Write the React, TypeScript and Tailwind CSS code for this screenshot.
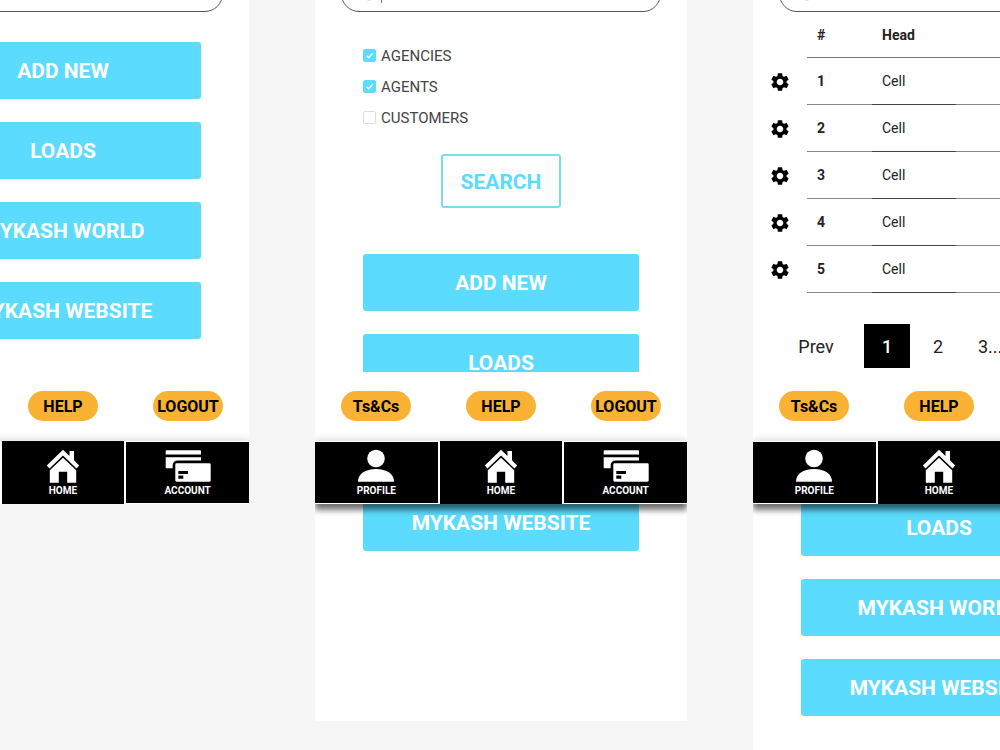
import React, { useState } from 'react';
import { MdSettings } from 'react-icons/md';

const rows = [1, 2, 3, 4, 5];

function SearchField({ label, caret }: { label: string; caret?: boolean }) {
  return (
    <div className="relative mx-[26px] -mt-6">
      <input
        type="text"
        aria-label={label}
        className="block h-9 w-full rounded-full border border-[#555] bg-white pl-12 text-sm focus:outline-none"
      />
      <svg className="absolute top-2 left-5 h-[18px] w-[18px]" viewBox="0 0 18 18" fill="none" stroke="#bbb">
        <circle cx="8" cy="10" r="6" />
      </svg>
      {caret && <span className="absolute top-2 left-10 h-[19px] w-px bg-[#777]" />}
    </div>
  );
}

function MenuButtons() {
  return (
    <div className="flex flex-col gap-[23px] px-12">
      {['ADD NEW', 'LOADS', 'MYKASH WORLD', 'MYKASH WEBSITE'].map((text) => (
        <button
          key={text}
          type="button"
          className="h-[57px] rounded-[3px] bg-[#5bdbfd] pt-[3px] text-[21px] font-bold text-white"
        >
          {text}
        </button>
      ))}
    </div>
  );
}

function ProfileIcon() {
  return (
    <svg className="h-[34px] w-12" viewBox="0 0 48 34" fill="white">
      <circle cx="24" cy="9.5" r="8.8" />
      <path d="M6 32.7C6 25 13 20 24 20s18 5 18 12.7z" />
    </svg>
  );
}

function HomeIcon() {
  return (
    <svg className="h-[34px] w-12" viewBox="0 0 48 34" fill="white">
      <path d="M24 0.8 30.5 7V2H35v9.3L40.2 16.5 37.5 19.4 24 6.5 10.5 19.4 7.8 16.5z" />
      <path d="M24 8.7 37.2 21.2V33.8H28.2V22.8H19.8V33.8H10.8V21.2z" />
    </svg>
  );
}

function AccountIcon() {
  return (
    <svg className="h-[34px] w-12" viewBox="0 0 48 34" fill="white">
      <path d="M2.5 1.3H36.2Q37 1.3 37 2.1V5.4H1.7V2.1Q1.7 1.3 2.5 1.3z" />
      <path d="M1.7 8.3H37V11.5H14Q8.6 11.5 8.6 17V19.3H2.5Q1.7 19.3 1.7 18.5z" />
      <rect x="11.3" y="14.3" width="35.4" height="18.4" rx="1.4" />
      <path fill="black" d="M14.3 22H24v3h-9.7zM14.3 26.5h5v3.3h-5z" />
    </svg>
  );
}

const navItems = [
  { label: 'PROFILE', icon: <ProfileIcon /> },
  { label: 'HOME', icon: <HomeIcon /> },
  { label: 'ACCOUNT', icon: <AccountIcon /> },
];

function Footer() {
  return (
    <footer>
      <div className="flex justify-between bg-white px-[26px] pt-[19px] pb-5">
        {['Ts&Cs', 'HELP', 'LOGOUT'].map((text) => (
          <button
            key={text}
            type="button"
            className="h-[30px] w-[70px] rounded-full bg-[#f9b233] pt-px text-base font-bold text-black"
          >
            {text}
          </button>
        ))}
      </div>
      <nav className="grid grid-cols-3 gap-0.5 bg-white shadow-[0_6px_6px_rgba(0,0,0,0.55),0_-2px_8px_rgba(0,0,0,0.12)]">
        {navItems.map((item) => (
          <a
            key={item.label}
            href="#"
            className="flex h-[63px] flex-col items-center border-y border-white bg-black pt-[7px] text-[10px] leading-4 font-bold text-white nth-2:border-black"
          >
            {item.icon}
            {item.label}
          </a>
        ))}
      </nav>
    </footer>
  );
}

function Filter({ label, initial }: { label: string; initial: boolean }) {
  const [checked, setChecked] = useState(initial);

  return (
    <label className="flex h-[31px] items-center gap-[5px] text-[15px] text-[#444]">
      <span className="relative h-[13px] w-[13px]">
        <input
          type="checkbox"
          checked={checked}
          onChange={(e) => setChecked(e.target.checked)}
          className="block h-[13px] w-[13px] appearance-none rounded-xs border border-[#ddd] bg-white checked:border-[#5bdbfd] checked:bg-[#5bdbfd]"
        />
        {checked && (
          <svg
            className="pointer-events-none absolute inset-0"
            viewBox="0 0 13 13"
            fill="none"
            stroke="white"
            strokeWidth="1.3"
          >
            <path d="M3.5 6.8 5.6 8.8 9.7 4.3" />
          </svg>
        )}
      </span>
      <span className="pt-0.5">{label}</span>
    </label>
  );
}

function HomeScreen() {
  return (
    <section className="w-[372px] shrink-0 overflow-hidden bg-white">
      <SearchField label="Search" />
      <div className="pt-[30px] pb-[33px]">
        <MenuButtons />
      </div>
      <Footer />
    </section>
  );
}

function FilterScreen() {
  return (
    <section className="relative w-[372px] shrink-0 overflow-hidden bg-white pb-[170px]">
      <SearchField label="Search" caret />
      <div className="px-12 pt-7">
        <Filter label="AGENCIES" initial={true} />
        <Filter label="AGENTS" initial={true} />
        <Filter label="CUSTOMERS" initial={false} />
      </div>
      <div className="flex justify-center pt-[21px] pb-[46px]">
        <button
          type="button"
          className="h-[54px] w-[120px] rounded-[3px] border-2 border-[#7adcf3] bg-white pt-[3px] text-[21px] font-bold text-[#5bdbfd]"
        >
          SEARCH
        </button>
      </div>
      <MenuButtons />
      <div className="absolute inset-x-0 top-[372px]">
        <Footer />
      </div>
    </section>
  );
}

function TableScreen() {
  return (
    <section className="relative w-[372px] shrink-0 overflow-hidden bg-white pb-12">
      <SearchField label="Search" />
      <table className="w-full table-fixed border-collapse text-left text-sm text-[#222]">
        <thead>
          <tr className="h-[45px]">
            <td className="w-[54px]"></td>
            <th className="w-[65px] border-b border-[#777] pt-0.5 pl-2.5">#</th>
            <th className="w-[84px] border-b border-[#777] pt-0.5 pl-2.5">Head</th>
            <td className="border-b border-[#777]"></td>
          </tr>
        </thead>
        <tbody>
          {rows.map((n) => (
            <tr key={n} className="h-[47px]">
              <td className="pt-0.5 pl-4">
                <button type="button" aria-label={`Settings ${n}`} className="block text-black">
                  <MdSettings size={22} />
                </button>
              </td>
              <th className="border-b border-[#888] pl-2.5">{n}</th>
              <td className="border-b border-[#444] pl-2.5">Cell</td>
              <td className="border-b border-[#888]"></td>
            </tr>
          ))}
        </tbody>
      </table>
      <div className="flex items-center pt-[31px] pb-[51px] pl-9 text-lg text-[#222]">
        <button type="button" className="w-[54px] pt-0.5">Prev</button>
        <button type="button" className="ml-[21px] h-11 w-[46px] bg-black pt-0.5 font-medium text-white">1</button>
        <button type="button" className="w-14 pt-0.5">2</button>
        <button type="button" className="ml-3 pt-0.5">3...</button>
      </div>
      <MenuButtons />
      <div className="absolute inset-x-0 top-[372px]">
        <Footer />
      </div>
    </section>
  );
}

export default function App() {
  return (
    <main className="flex h-screen items-start justify-center gap-[66px] overflow-hidden bg-[#f6f6f6] pl-0.5 font-[Roboto,sans-serif]">
      <HomeScreen />
      <FilterScreen />
      <TableScreen />
    </main>
  );
}
